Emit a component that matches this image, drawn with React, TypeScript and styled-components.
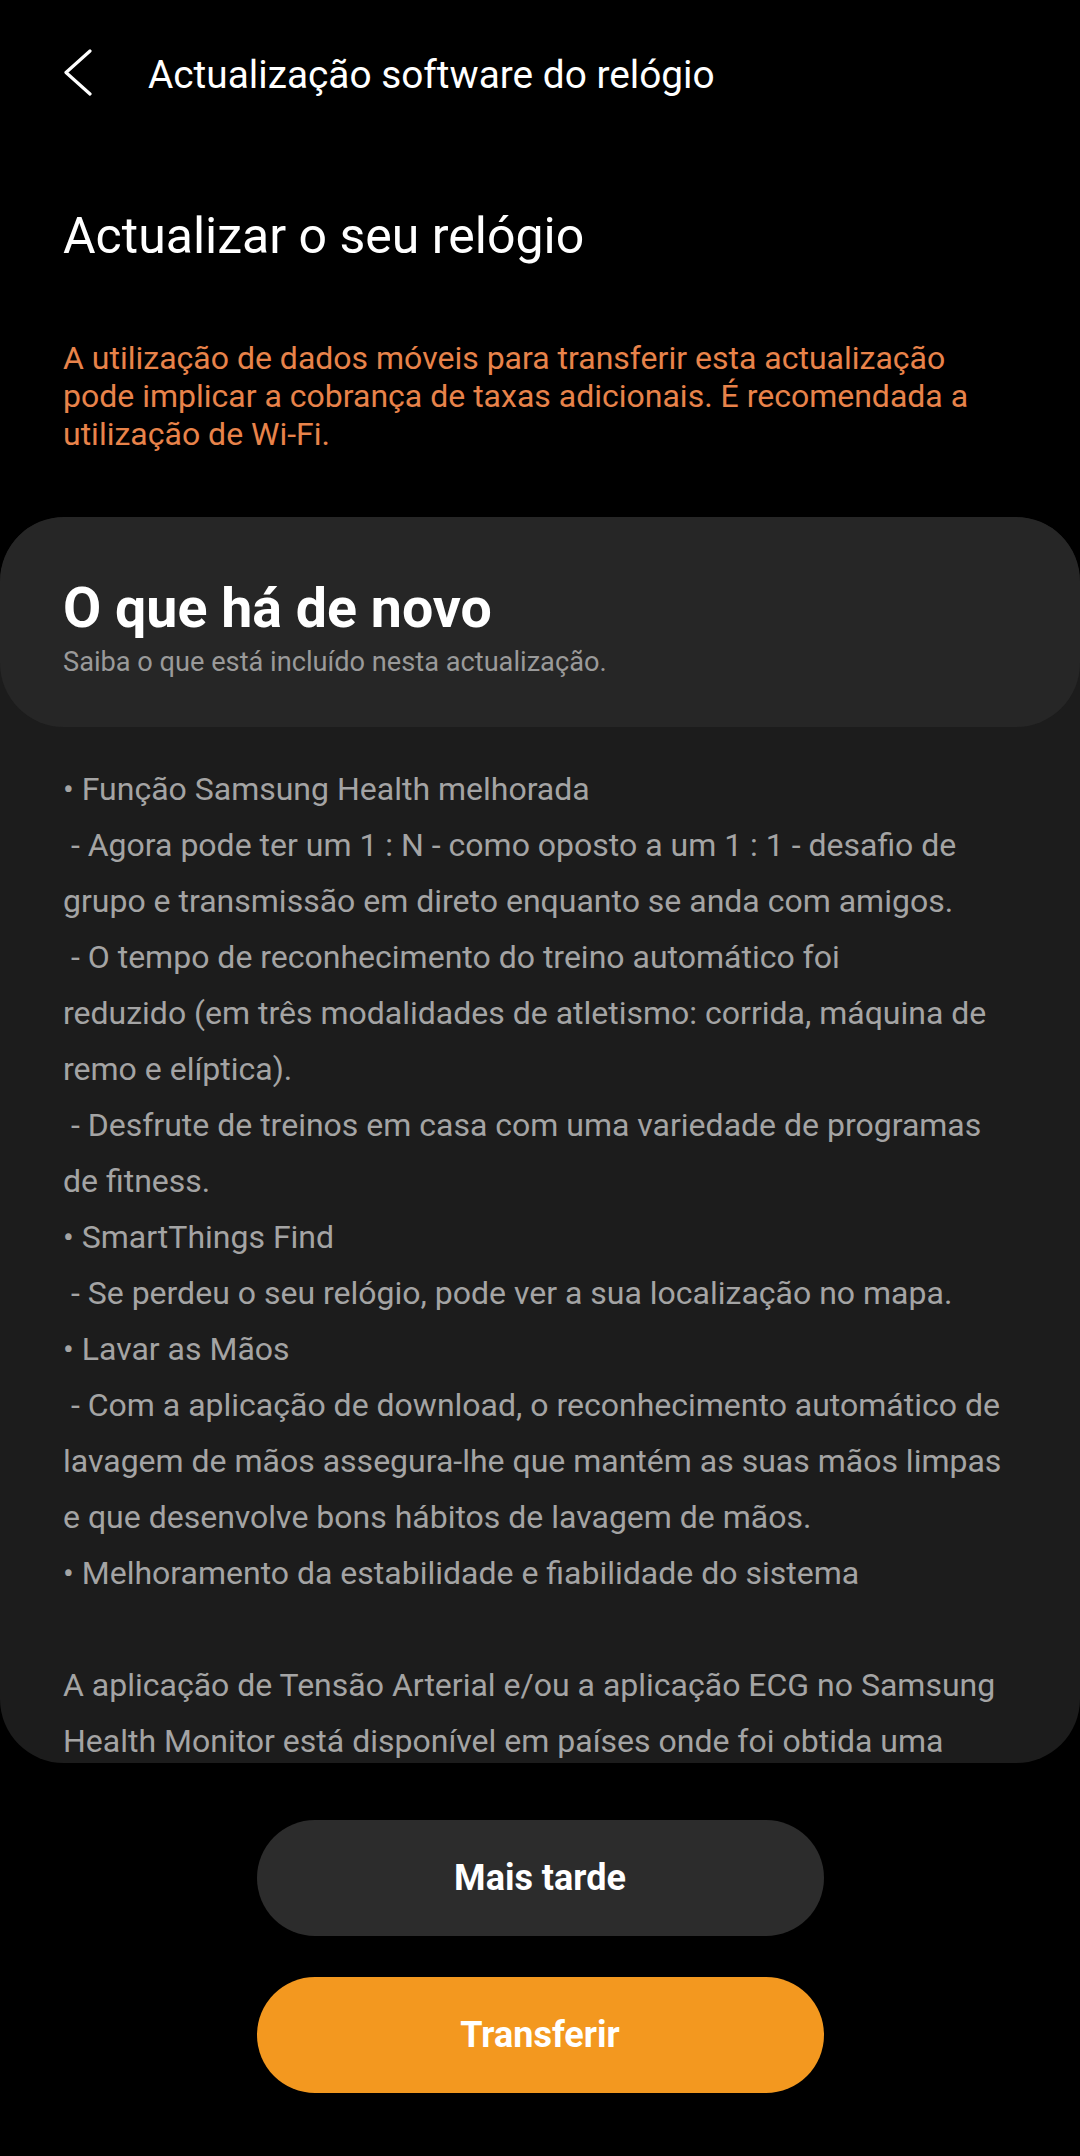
import React from "react";
import styled, { createGlobalStyle } from "styled-components";

const GlobalStyle = createGlobalStyle`
  html, body {
    margin: 0;
    padding: 0;
    background: #000;
  }
  body {
    font-family: Roboto, "Noto Sans", sans-serif;
    -webkit-font-smoothing: antialiased;
  }
`;

const notes: string[][] = [
  ["• Função Samsung Health melhorada"],
  [
    " - Agora pode ter um 1 : N - como oposto a um 1 : 1 - desafio de",
    "grupo e transmissão em direto enquanto se anda com amigos.",
  ],
  [
    " - O tempo de reconhecimento do treino automático foi",
    "reduzido (em três modalidades de atletismo: corrida, máquina de",
    "remo e elíptica).",
  ],
  [
    " - Desfrute de treinos em casa com uma variedade de programas",
    "de fitness.",
  ],
  ["• SmartThings Find"],
  [" - Se perdeu o seu relógio, pode ver a sua localização no mapa."],
  ["• Lavar as Mãos"],
  [
    " - Com a aplicação de download, o reconhecimento automático de",
    "lavagem de mãos assegura-lhe que mantém as suas mãos limpas",
    "e que desenvolve bons hábitos de lavagem de mãos.",
  ],
  ["• Melhoramento da estabilidade e fiabilidade do sistema"],
  [""],
  [
    "A aplicação de Tensão Arterial e/ou a aplicação ECG no Samsung",
    "Health Monitor está disponível em países onde foi obtida uma",
  ],
];

export default function App() {
  return (
    <Screen>
      <GlobalStyle />
      <TopBar>
        <BackButton aria-label="Voltar">
          <svg width="30" height="48" viewBox="0 0 30 48">
            <path
              d="M27 2 L3 23.5 L27 45"
              fill="none"
              stroke="#fff"
              strokeWidth="3.2"
              strokeLinecap="round"
              strokeLinejoin="round"
            />
          </svg>
        </BackButton>
        <BarTitle>Actualização software do relógio</BarTitle>
      </TopBar>

      <PageTitle>Actualizar o seu relógio</PageTitle>
      <Warning>
        A utilização de dados móveis para transferir esta actualização
        <br />
        pode implicar a cobrança de taxas adicionais. É recomendada a
        <br />
        utilização de Wi-Fi.
      </Warning>

      <Card>
        <CardHeader>
          <CardTitle>O que há de novo</CardTitle>
          <CardSubtitle>Saiba o que está incluído nesta actualização.</CardSubtitle>
        </CardHeader>
        <CardBody>
          {notes.map((block, i) => (
            <Note key={i}>
              {block.map((line, j) => (
                <Line key={j}>{line || "\u00a0"}</Line>
              ))}
            </Note>
          ))}
        </CardBody>
      </Card>

      <Actions>
        <ActionButton>Mais tarde</ActionButton>
        <ActionButton $primary>Transferir</ActionButton>
      </Actions>
    </Screen>
  );
}

const Screen = styled.div`
  width: 1080px;
  min-height: 2156px;
  background: #000;
  display: flex;
  flex-direction: column;
`;

const TopBar = styled.header`
  height: 148px;
  flex-shrink: 0;
  display: flex;
  align-items: center;
  padding-left: 63px;
`;

const BackButton = styled.button`
  background: none;
  border: 0;
  padding: 0;
  width: 30px;
  height: 48px;
  display: flex;
  align-items: center;
  justify-content: center;
  margin-top: -2px;
`;

const BarTitle = styled.h1`
  margin: 0 0 0 55px;
  font-size: 38.8px;
  font-weight: 400;
  color: #fff;
`;

const PageTitle = styled.h2`
  margin: 58px 0 0 63px;
  font-size: 50px;
  line-height: 60px;
  font-weight: 400;
  color: #fff;
`;

const Warning = styled.p`
  margin: 73px 0 0 63px;
  font-size: 32px;
  line-height: 38px;
  color: #e8834a;
`;

const Card = styled.section`
  margin-top: 64px;
  height: 1246px;
  flex-shrink: 0;
  border-radius: 64px;
  background: #1c1c1c;
  overflow: hidden;
  display: flex;
  flex-direction: column;
`;

const CardHeader = styled.div`
  height: 210px;
  flex-shrink: 0;
  box-sizing: border-box;
  background: #262626;
  border-radius: 64px;
  padding: 60px 63px 0;
`;

const CardTitle = styled.h3`
  margin: 0;
  font-size: 55.5px;
  line-height: 64px;
  font-weight: 700;
  color: #fff;
`;

const CardSubtitle = styled.p`
  margin: 5px 0 0;
  font-size: 27.2px;
  line-height: 32px;
  color: #9a9a9a;
`;

const CardBody = styled.div`
  padding: 34px 63px 0;
`;

const Note = styled.div`
  font-size: 32px;
  line-height: 56px;
  color: #a4a4a4;
`;

const Line = styled.div`
  white-space: pre;
`;

const Actions = styled.div`
  margin-top: 57px;
  display: flex;
  flex-direction: column;
  align-items: center;
  gap: 41px;
`;

const ActionButton = styled.button<{ $primary?: boolean }>`
  width: 567px;
  height: 116px;
  border: 0;
  border-radius: 58px;
  background: ${(p) => (p.$primary ? "#f3981f" : "#2c2c2c")};
  color: #fff;
  font-family: Roboto, "Noto Sans", sans-serif;
  font-size: 36px;
  font-weight: 700;
`;
